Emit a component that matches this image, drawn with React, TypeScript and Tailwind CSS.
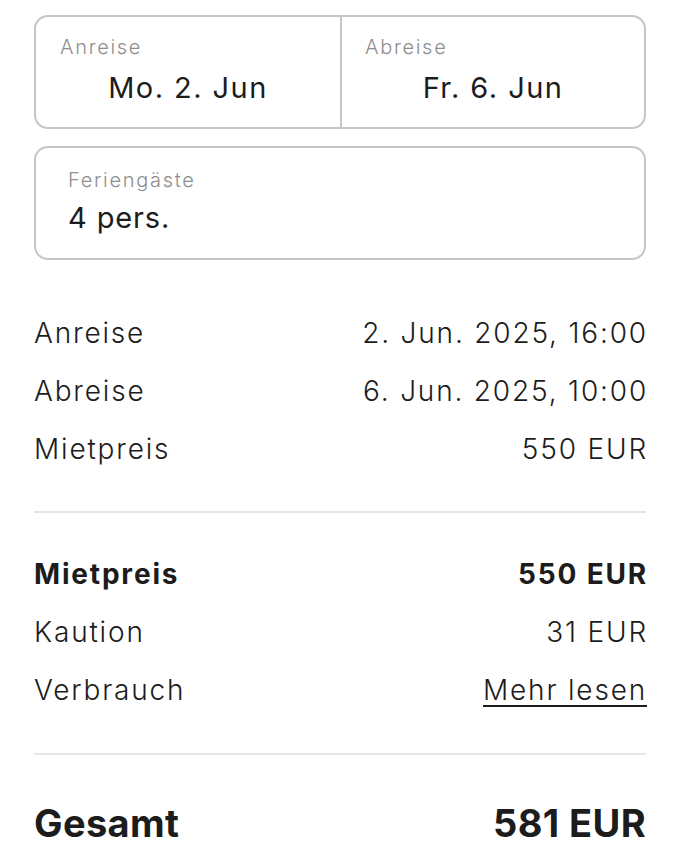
export default function App() {
  const font = { fontFamily: "Inter, 'Noto Sans', sans-serif" }
  return (
    <div className="min-h-screen bg-white text-[#1c1c1c]" style={font}>
      <div className="px-[34px] pt-[15px] pb-10">
        {/* Dates */}
        <div className="grid h-[114px] grid-cols-[306px_1fr] rounded-[14px] border-2 border-[#c6c6c8]">
          <div className="flex flex-col border-r-2 border-[#c6c6c8] px-[24px] pt-[17px]">
            <span className="text-[20px] leading-[26px] font-light tracking-[0.085em] text-[#8e8e8e]">Anreise</span>
            <span className="mt-[10px] text-center text-[29px] leading-[36px] font-normal tracking-[0.05em]">Mo. 2. Jun</span>
          </div>
          <div className="flex flex-col px-[23px] pt-[17px]">
            <span className="text-[20px] leading-[26px] font-light tracking-[0.085em] text-[#8e8e8e]">Abreise</span>
            <span className="mt-[10px] text-center text-[29px] leading-[36px] font-normal tracking-[0.05em]">Fr. 6. Jun</span>
          </div>
        </div>

        {/* Guests */}
        <div className="mt-[17px] flex h-[114px] flex-col rounded-[14px] border-2 border-[#c6c6c8] px-[32px] pt-[19px]">
          <span className="text-[20px] leading-[26px] font-light tracking-[0.085em] text-[#8e8e8e]">Feriengäste</span>
          <span className="mt-[7px] text-[29px] leading-[36px] font-normal tracking-[0.03em]">4 pers.</span>
        </div>

        {/* Details */}
        <div className="mt-[44px] text-[28px] font-light tracking-[0.065em]">
          <div className="flex h-[58px] items-center justify-between">
            <span>Anreise</span>
            <span className="-mr-[2px]">2. Jun. 2025, 16:00</span>
          </div>
          <div className="flex h-[58px] items-center justify-between">
            <span>Abreise</span>
            <span className="-mr-[2px]">6. Jun. 2025, 10:00</span>
          </div>
          <div className="flex h-[58px] items-center justify-between">
            <span>Mietpreis</span>
            <span className="-mr-[2px]">550 EUR</span>
          </div>
        </div>

        <div className="mt-[33px] h-[2px] bg-[#e6e6e6]" />

        <div className="mt-[32px] text-[28px] font-light tracking-[0.065em]">
          <div className="flex h-[58px] items-center justify-between font-bold">
            <span>Mietpreis</span>
            <span className="-mr-[2px]">550 EUR</span>
          </div>
          <div className="flex h-[58px] items-center justify-between">
            <span>Kaution</span>
            <span className="-mr-[2px]">31 EUR</span>
          </div>
          <div className="flex h-[58px] items-center justify-between">
            <span>Verbrauch</span>
            <a className="-mr-[1px] underline decoration-2 underline-offset-[5px]">Mehr lesen</a>
          </div>
        </div>

        <div className="mt-[34px] h-[2px] bg-[#e6e6e6]" />

        <div className="mt-[43px] flex items-center justify-between text-[38px] leading-[50px] font-bold tracking-[0.01em]">
          <span>Gesamt</span>
          <span>581 EUR</span>
        </div>
      </div>
    </div>
  )
}
